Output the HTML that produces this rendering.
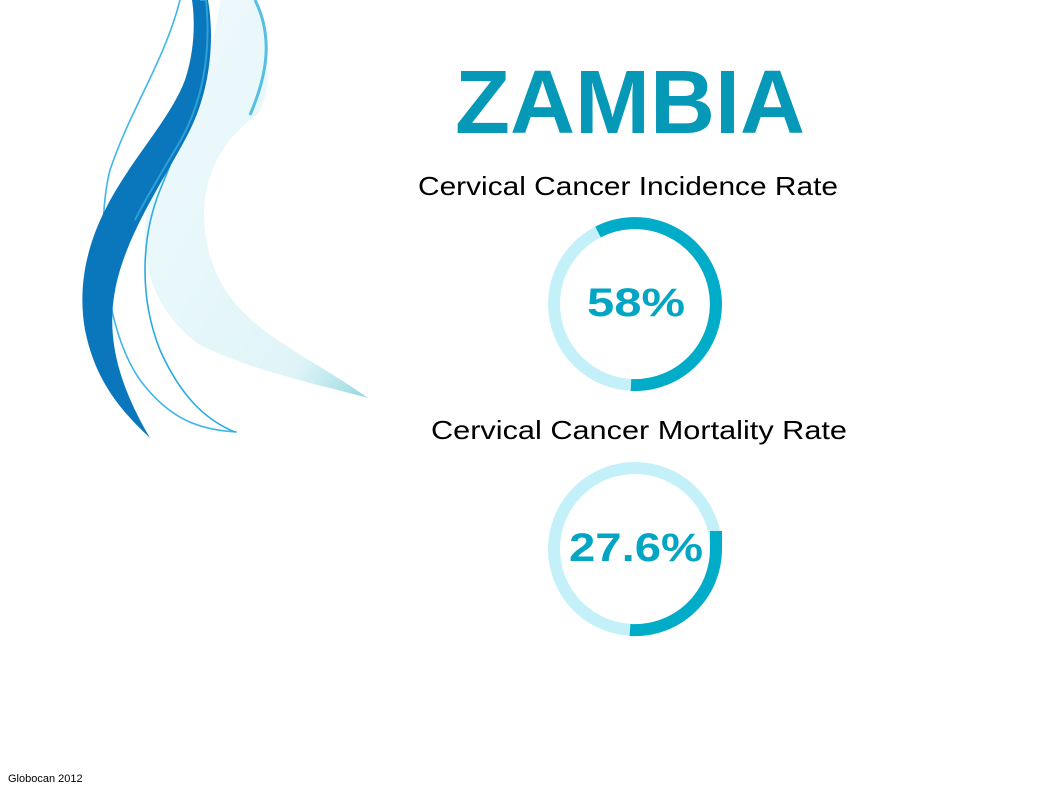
<!DOCTYPE html>
<html><head><meta charset="utf-8"><style>
html,body{margin:0;padding:0;background:#fff;width:1061px;height:800px;overflow:hidden}
svg{display:block}
</style></head><body>
<svg width="1061" height="800" viewBox="0 0 1061 800" xmlns="http://www.w3.org/2000/svg">
<defs>
<linearGradient id="veil" x1="0" y1="0" x2="1" y2="1">
<stop offset="0" stop-color="#e6f6fb" stop-opacity="0.6"/>
<stop offset="0.8" stop-color="#d2f0f4" stop-opacity="0.7"/>
<stop offset="1" stop-color="#8fd6de"/>
</linearGradient>
</defs>
<path d="M255 0 C 275 60 270 110 250 120 C 200 160 195 220 215 270 C 240 330 300 350 368 398 C 320 385 250 370 200 345 C 150 310 135 250 150 200 C 180 130 215 60 220 0 Z" fill="url(#veil)"/>
<path d="M180 0 C 165 60 130 110 110 170 C 95 230 105 330 140 380 C 170 420 200 430 237 432" fill="none" stroke="#3fb6ea" stroke-width="1.6"/>
<path d="M255 0 C 275 40 265 80 250 115" fill="none" stroke="#57bfe2" stroke-width="3"/>
<path d="M205 0 C 210 60 185 130 160 190 C 140 240 140 300 160 350 C 180 395 205 420 235 432" fill="none" stroke="#29abe2" stroke-width="1.6"/>
<path d="M192 0 L208 0 C 215 40 210 90 190 130 C 170 170 135 220 120 270 C 105 320 110 370 150 438 C 120 410 95 380 85 330 C 78 290 85 250 105 210 C 130 160 170 120 185 80 C 195 50 195 20 192 0 Z" fill="#0a77bd"/>
<path d="M200 0 L206 0 C 212 60 200 110 175 150 C 160 175 145 200 135 220" fill="none" stroke="#2ea0d8" stroke-width="2"/>
<text x="630" y="133" text-anchor="middle" font-family="Liberation Sans, sans-serif" font-weight="bold" font-size="90" fill="#0699b7" textLength="350" lengthAdjust="spacingAndGlyphs">ZAMBIA</text>
<text x="418" y="195" font-family="Liberation Sans, sans-serif" font-size="26" fill="#000" textLength="420" lengthAdjust="spacingAndGlyphs">Cervical Cancer Incidence Rate</text>
<text x="431" y="439" font-family="Liberation Sans, sans-serif" font-size="26" fill="#000" textLength="416" lengthAdjust="spacingAndGlyphs">Cervical Cancer Mortality Rate</text>
<circle cx="635" cy="304" r="81" fill="none" stroke="#c4f1f9" stroke-width="12"/>
<path d="M598 232 A81 81 0 1 1 631 385" fill="none" stroke="#00acc8" stroke-width="12"/>
<text x="636" y="316" text-anchor="middle" font-family="Liberation Sans, sans-serif" font-weight="bold" font-size="40" fill="#02a6c4" textLength="98" lengthAdjust="spacingAndGlyphs">58%</text>
<circle cx="635" cy="549" r="81" fill="none" stroke="#c4f1f9" stroke-width="12"/>
<path d="M716 531 L716 549 A81 81 0 0 1 630 630" fill="none" stroke="#00acc8" stroke-width="12"/>
<text x="636" y="561" text-anchor="middle" font-family="Liberation Sans, sans-serif" font-weight="bold" font-size="40" fill="#02a6c4" textLength="134" lengthAdjust="spacingAndGlyphs">27.6%</text>
<text x="8" y="782" font-family="Liberation Sans, sans-serif" font-size="11" fill="#000">Globocan 2012</text>
</svg>
</body></html>
